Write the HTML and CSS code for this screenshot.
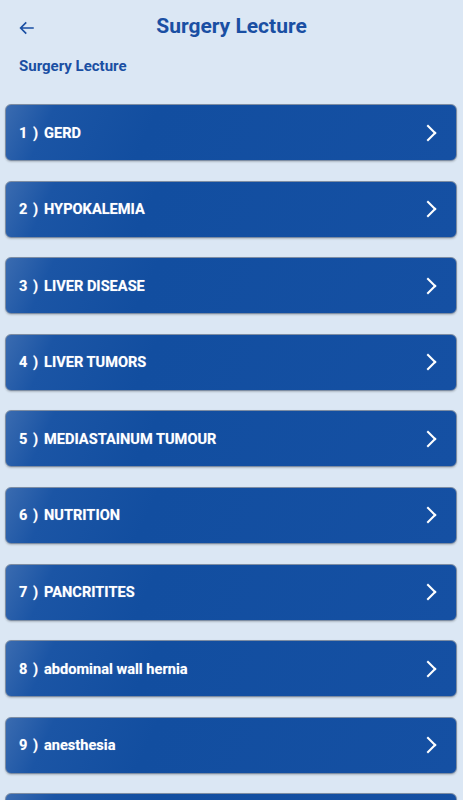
FILE: index.html
```html
<!DOCTYPE html>
<html lang="en">
<head>
    <meta charset="UTF-8">
    <title>Surgery Lecture</title>
    <link rel="stylesheet" href="styles.css">
</head>
<body>
    <header class="topbar">
        <button class="back" aria-label="Back">
            <svg width="18" height="18" viewBox="0 0 24 24"><path d="M21 12H4M11 4.5 3.5 12l7.5 7.5" fill="none" stroke="#1a4fa3" stroke-width="2.2"/></svg>
        </button>
        <h1>Surgery Lecture</h1>
    </header>

    <h2 class="subtitle">Surgery Lecture</h2>

    <ul class="lectures">
        <li class="lecture"><span class="num">1 )</span><span class="name">GERD</span><span class="chev"></span></li>
        <li class="lecture"><span class="num">2 )</span><span class="name">HYPOKALEMIA</span><span class="chev"></span></li>
        <li class="lecture"><span class="num">3 )</span><span class="name">LIVER DISEASE</span><span class="chev"></span></li>
        <li class="lecture"><span class="num">4 )</span><span class="name">LIVER TUMORS</span><span class="chev"></span></li>
        <li class="lecture"><span class="num">5 )</span><span class="name">MEDIASTAINUM TUMOUR</span><span class="chev"></span></li>
        <li class="lecture"><span class="num">6 )</span><span class="name">NUTRITION</span><span class="chev"></span></li>
        <li class="lecture"><span class="num">7 )</span><span class="name">PANCRITITES</span><span class="chev"></span></li>
        <li class="lecture"><span class="num">8 )</span><span class="name">abdominal wall hernia</span><span class="chev"></span></li>
        <li class="lecture"><span class="num">9 )</span><span class="name">anesthesia</span><span class="chev"></span></li>
        <li class="lecture"></li>
    </ul>
</body>
</html>
```

FILE: styles.css
```css
body {
    margin: 0;
    background: #dbe7f4;
    font-family: Roboto, "Liberation Sans", sans-serif;
    overflow: hidden;
}
.topbar {
    display: grid;
    grid-template-columns: 56px 1fr 56px;
    align-items: center;
    height: 52px;
}
.back {
    border: none;
    background: none;
    padding: 0;
    margin-left: 18px;
    width: 18px;
    height: 18px;
    display: flex;
    margin-top: 4px;
}
.topbar h1 {
    margin: 0;
    text-align: center;
    font-size: 21px;
    font-weight: 700;
    color: #1a4fa3;
}
.subtitle {
    margin: 6px 0 0 19px;
    font-size: 15px;
    font-weight: 700;
    color: #1a4fa3;
    height: 16px;
    line-height: 16px;
}
.lectures {
    list-style: none;
    margin: 30px 6px 0 5px;
    padding: 0;
    display: flex;
    flex-direction: column;
    gap: 19.6px;
}
.lecture {
    height: 55px;
    flex-shrink: 0;
    display: flex;
    align-items: center;
    padding: 0 18px 0 13px;
    border: 1px solid #7d8da3;
    border-radius: 6px;
    background: linear-gradient(115deg, #3a6bb0 0px, #1b55a5 45px, #124ea0 140px, #1550a3 100%);
    box-shadow: 0 1px 2px rgba(0, 0, 0, 0.2);
    color: #fff;
    font-size: 14.6px;
    font-weight: 700;
    text-shadow: 0 0 1px rgba(255, 255, 255, 0.4);
}
.num {
    width: 25px;
    letter-spacing: 1px;
}
.name {
    flex: 1;
}
.chev {
    width: 10px;
    height: 10px;
    border-top: 2px solid #fff;
    border-right: 2px solid #fff;
    transform: rotate(45deg);
    margin-right: 4px;
}
```
